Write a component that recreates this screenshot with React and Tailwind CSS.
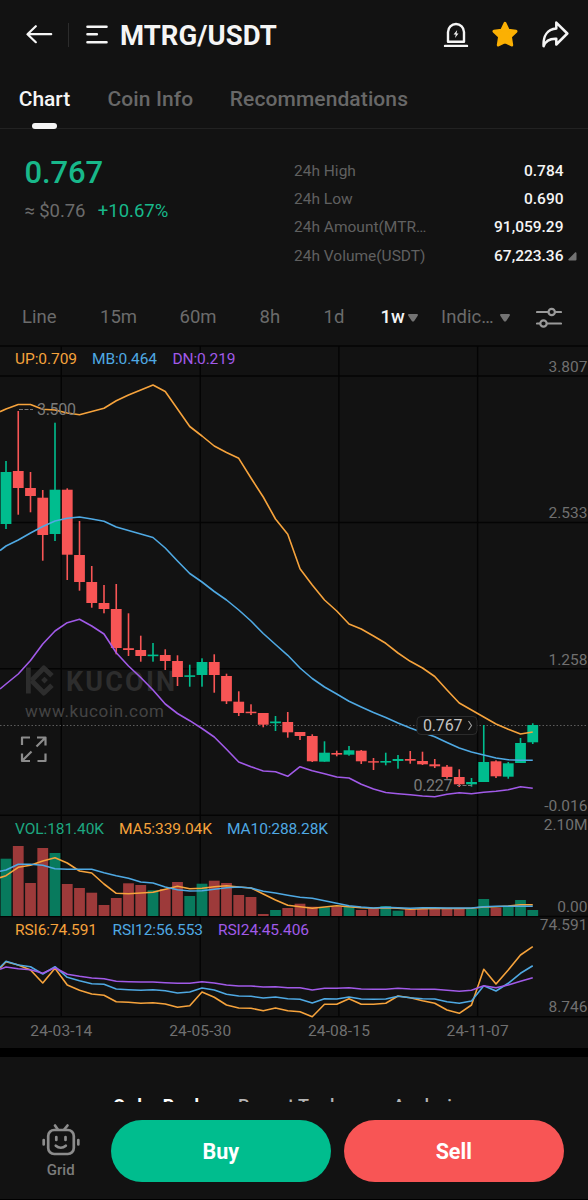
import React from 'react';

const GREEN = '#00bd8e';
const RED = '#f85555';
const ORANGE = '#f6a33c';
const BLUE = '#4fa9e3';
const PURPLE = '#a15ae8';

const STEP = 12.25;
const FIRST_X = 6;
const candleX = (i) => FIRST_X + i * STEP;

// [direction, high, open/close top, open/close bottom, low, volume top]
const CANDLES = [
  ['up', 461, 472, 524, 529, 858.7],
  ['down', 411, 471, 488, 514.7, 846],
  ['down', 472, 488, 496, 512.3, 883],
  ['down', 490, 497.7, 535, 560.7, 848],
  ['up', 422.7, 489.7, 534, 541, 853],
  ['down', 488.3, 489.7, 554.7, 580, 884],
  ['down', 521, 555, 582, 590.7, 888],
  ['down', 566, 582, 603, 607.7, 892.7],
  ['down', 585, 603, 609, 613.3, 905],
  ['down', 584, 609, 648, 654.3, 898],
  ['down', 613.3, 648.2, 650, 656, 883.3],
  ['down', 635.7, 650, 656, 661.7, 885],
  ['up', 643, 654.6, 656.2, 661.7, 890.3],
  ['down', 649.3, 655, 661, 670, 889],
  ['down', 655.3, 661, 677, 686, 882],
  ['up', 664.7, 675.3, 676.9, 686.7, 896],
  ['up', 658.3, 662, 675, 686.7, 883.7],
  ['down', 654.3, 662, 675, 692.7, 880.7],
  ['down', 673.7, 676, 701.3, 704, 883],
  ['down', 691.3, 701.7, 713, 716, 895],
  ['down', 704.3, 711.7, 713.2, 715, 897],
  ['down', 713, 713, 724.7, 727.3, 914],
  ['up', 716, 721.5, 723.2, 731, 910],
  ['down', 712, 722, 732.3, 737.7, 908],
  ['down', 732, 732, 736, 740, 903.7],
  ['down', 734.3, 736, 761.3, 762, 906.7],
  ['up', 741.3, 752.7, 761.7, 761.7, 907.3],
  ['down', 750.7, 753, 754.6, 756.3, 906.7],
  ['up', 746, 750.3, 754.7, 755.7, 906.7],
  ['down', 750, 750.7, 761.3, 764, 910],
  ['down', 758, 761.2, 762.6, 770, 909],
  ['up', 752.7, 761, 762.6, 765.3, 906],
  ['up', 755, 759, 761, 768.7, 910.7],
  ['down', 751, 759, 760.7, 763.7, 909],
  ['down', 751.7, 761, 764.3, 765, 909],
  ['down', 759, 764.3, 766.3, 768, 909],
  ['down', 765, 766.7, 777, 778.7, 909],
  ['down', 769.3, 777, 784.3, 787, 909],
  ['up', 778, 782, 784.3, 786.7, 909],
  ['up', 725, 762, 782, 782, 899],
  ['down', 760.3, 761.3, 776.3, 778, 907.7],
  ['up', 762, 763.3, 776.7, 778.7, 906.7],
  ['up', 738, 743, 763, 763, 900],
  ['up', 723.3, 725, 742.3, 744, 910],
];

// Every series starts with its value at the left edge, then one per candle.
const LINES = [
  {
    id: 'boll-up',
    color: ORANGE,
    values: [411.7, 409, 404.5, 404.5, 409.3, 410, 413, 414.7, 411.5, 408.3, 400.7, 395, 390, 385, 391.5, 409, 426.5, 436, 446, 452.5, 458.3, 478, 497, 519, 534.3, 568.7, 585, 600, 611, 624, 629, 636, 643.3, 653, 661.3, 668, 676.5, 690, 703, 710, 717, 724, 729.3, 734, 732],
  },
  {
    id: 'boll-mid',
    color: BLUE,
    values: [550.5, 546, 540, 533, 526.5, 521, 518.3, 517, 519, 521.3, 527, 530.5, 534, 537.5, 548, 561, 573.5, 582, 591.5, 600, 610, 621, 633.5, 644.5, 655.3, 668, 678.5, 687, 694, 701.3, 707, 712.5, 717.5, 723, 728, 732.5, 736.7, 742.5, 748, 752, 755, 758, 759.7, 760.3, 760.3],
  },
  {
    id: 'boll-down',
    color: PURPLE,
    values: [689, 684, 674, 660.5, 644, 631, 622.7, 619.3, 626, 634, 652.7, 666, 677.5, 690, 704, 713.5, 720.7, 728.5, 737, 749.3, 762, 766.7, 771, 771.7, 776.3, 766.7, 770.7, 773.7, 777, 778, 784.3, 789, 792.5, 793.7, 794.7, 796, 796.7, 794.3, 792.7, 793.7, 792.3, 791.3, 789.7, 786.7, 788.3],
  },
  {
    id: 'vol-ma5',
    color: ORANGE,
    values: [877.7, 875.7, 867.3, 865.3, 861, 857.7, 863, 871, 873, 884, 893.3, 893.7, 893, 892.3, 889.3, 886.3, 888.7, 888.3, 886.7, 885.7, 887, 888, 894, 900, 905.3, 906.7, 908.3, 907, 905.7, 906.7, 907.7, 908.3, 907.7, 908.3, 909.3, 908.7, 908.5, 908.5, 908.5, 908.3, 907, 906.7, 906, 904.7, 904.7],
  },
  {
    id: 'vol-ma10',
    color: BLUE,
    values: [871.3, 870, 864.3, 864.3, 865.3, 868.7, 869.3, 869.3, 869.3, 872.7, 875.7, 878.3, 882, 883, 887, 889.7, 891, 890.7, 889.3, 887.7, 887, 888, 891.3, 893, 895.2, 897.3, 898.3, 900.7, 903.3, 905.7, 907, 908, 907.3, 907.7, 908.3, 907.7, 907.7, 908, 908, 908, 906.7, 906.3, 906.3, 906.3, 906.3],
  },
  {
    id: 'rsi6',
    color: ORANGE,
    values: [968.3, 961.7, 965, 970, 983, 968.3, 985, 990.3, 994, 995.3, 1001.7, 1002.3, 1003.3, 1002.7, 1004, 1007.3, 1005.7, 992, 997.3, 1005, 1008, 1008.3, 1010.7, 1008, 1010.7, 1011.7, 1016.7, 1004.3, 1004.3, 998.7, 1004.3, 1004.3, 1003.3, 996, 997.7, 1000.7, 1003.3, 1010, 1013.3, 1005, 969.3, 984, 970, 955, 946.7],
  },
  {
    id: 'rsi12',
    color: BLUE,
    values: [967.3, 961.3, 965, 966.7, 974, 966.7, 977.3, 980.7, 983.7, 984.3, 989, 989.7, 990.3, 989.7, 990.7, 993, 992, 988, 990, 994.3, 996, 996.3, 998, 997, 998.7, 999.3, 1003, 998.7, 999, 997, 999, 999.3, 999, 996.3, 997.7, 998.7, 999, 1001.7, 1003.3, 1001, 985.7, 991, 983.3, 973.3, 965.7],
  },
  {
    id: 'rsi24',
    color: PURPLE,
    values: [969.3, 967, 968.7, 969.7, 973.3, 967.7, 974.3, 976.3, 978, 978.7, 981.3, 981.7, 982, 982, 982.7, 983.3, 983.3, 981.7, 983, 985, 986, 986, 987, 986.7, 987.7, 987.7, 990, 988.3, 988.3, 987.7, 989, 989.3, 989.3, 988.3, 989, 989.3, 989.3, 990.3, 991.3, 990.3, 985.7, 987.7, 985, 981.3, 977.7],
  },
];

const toPoints = (values) =>
  values.map((y, i) => `${i === 0 ? 0 : candleX(i - 1)},${y}`).join(' ');

const LEGENDS = [
  { x: 15, y: 364, w: 62, color: ORANGE, label: 'UP:0.709' },
  { x: 92, y: 364, w: 65, color: BLUE, label: 'MB:0.464' },
  { x: 172.5, y: 364, w: 63, color: PURPLE, label: 'DN:0.219' },
  { x: 15, y: 834, w: 89, color: '#1da780', label: 'VOL:181.40K' },
  { x: 119, y: 834, w: 93, color: ORANGE, label: 'MA5:339.04K' },
  { x: 227, y: 834, w: 101, color: BLUE, label: 'MA10:288.28K' },
  { x: 15, y: 935, w: 82, color: ORANGE, label: 'RSI6:74.591' },
  { x: 112.5, y: 935, w: 90.5, color: BLUE, label: 'RSI12:56.553' },
  { x: 218, y: 935, w: 91, color: PURPLE, label: 'RSI24:45.406' },
];

const AXIS = [
  { y: 371.5, label: '3.807' },
  { y: 518, label: '2.533' },
  { y: 664.5, label: '1.258' },
  { y: 810.5, label: '-0.016' },
  { y: 829.5, label: '2.10M' },
  { y: 911.5, label: '0.00' },
  { y: 930, label: '74.591' },
  { y: 1012, label: '8.746' },
];

const DATES = [
  { x: 61.3, label: '24-03-14' },
  { x: 200.2, label: '24-05-30' },
  { x: 338.9, label: '24-08-15' },
  { x: 477.6, label: '24-11-07' },
];

const STATS = [
  { label: '24h High', value: '0.784' },
  { label: '24h Low', value: '0.690' },
  { label: '24h Amount(MTR…', value: '91,059.29' },
  { label: '24h Volume(USDT)', value: '67,223.36' },
];

function Caret() {
  return (
    <svg width="10" height="8" viewBox="0 0 10 8" fill="#737373" className="shrink-0">
      <path d="M1.2 0h7.6c1 0 1.5 1 .9 1.8L6.2 6.9c-.6.8-1.8.8-2.4 0L.3 1.8C-.3 1 .2 0 1.2 0Z" />
    </svg>
  );
}

function Header() {
  return (
    <header className="flex h-[69px] items-center pl-[26px] pr-[19px]">
      <svg width="27" height="20" viewBox="0 0 27 20" fill="none" stroke="#f5f5f5" strokeWidth="2.2" strokeLinecap="round" strokeLinejoin="round">
        <path d="M25.2 9.2H1.8M9.8 1.2 1.5 9.2l8.3 8" />
      </svg>
      <div className="ml-[15px] h-6 w-px bg-[#2c2c2c]" />
      <svg width="22" height="20" viewBox="0 0 22 20" fill="none" stroke="#f5f5f5" strokeWidth="2.6" strokeLinecap="round" className="ml-[17px]">
        <path d="M1.5 1.7h19M1.5 9.3h9.3M1.5 17.3h19" />
      </svg>
      <h1 className="ml-[12px] pt-[2px] text-[27.5px] font-bold tracking-[0.05px] text-[#f5f5f5]">MTRG/USDT</h1>
      <div className="ml-auto flex items-center gap-[22px]">
        <svg width="26" height="28" viewBox="0 0 26 28" fill="none" stroke="#f5f5f5" strokeWidth="2.4" strokeLinecap="round" strokeLinejoin="round">
          <path d="M5 20.7V11a8 8 0 0 1 16 0v9.7ZM2 24.9h22" />
          <path d="M14.2 8.9 10.6 13.5h2.2l-.8 3.4 3.5-4.5h-2Z" fill="#f5f5f5" stroke="none" />
        </svg>
        <svg width="28" height="28" viewBox="0 0 28 28" fill="#fbb003" stroke="#fbb003" strokeWidth="3" strokeLinejoin="round">
          <path d="m14 2.4 3.3 6.9 7.7 1-5.6 5.3 1.3 8.4L14 20.6 7.3 24l1.3-8.4L3 10.300l7.700-1Z" />
        </svg>
        <svg width="28" height="28" viewBox="0 0 28 28" fill="none" stroke="#f5f5f5" strokeWidth="2.5" strokeLinecap="round" strokeLinejoin="round">
          <path d="M15.3 1.6 26.3 12.500 15.3 23.500v-5.700C9 17.500 4.800 19.300 2.600 25.200 2 15.400 6.200 8.400 15.300 7.600Z" />
        </svg>
      </div>
    </header>
  );
}

function Tabs() {
  return (
    <nav className="flex h-[60px] items-start border-b border-[#222] pl-[18.5px] text-[21px] font-medium leading-6 text-[#686868]">
      <div className="flex w-[52px] flex-col items-center pt-[18px] text-[#f5f5f5]">
        <span>Chart</span>
        <span className="mt-[12px] h-[6px] w-[25px] rounded-full bg-[#f5f5f5]" />
      </div>
      <span className="ml-[37px] mt-[18px] tracking-[0.1px]">Coin Info</span>
      <span className="ml-[36.5px] mt-[18px] tracking-[0.1px]">Recommendations</span>
    </nav>
  );
}

function Summary() {
  return (
    <section className="flex h-[159px] justify-between pl-[24.500px]">
      <div className="pt-[24px]">
        <p className="text-[31px] font-medium leading-[40px] tracking-[-0.1px] text-[#18b88a]">0.767</p>
        <p className="mt-[6px] flex gap-[12.500px] text-[18.500px] leading-6 text-[#6b6b6b]">
          <span className="tracking-[-0.1px]">≈ $0.76</span>
          <span className="text-[#18b88a]">+10.67%</span>
        </p>
      </div>
      <dl className="flex w-[294px] flex-col pr-[11.500px] pt-[28px] text-[15.500px]">
        {STATS.map((s, i) => (
          <div key={s.label} className="flex h-[28.400px] items-center">
            <dt className="text-[#606060]">{s.label}</dt>
            <dd className="ml-auto font-medium text-[#f5f5f5]">{s.value}</dd>
            <svg width="9" height="9" viewBox="0 0 9 9" className="ml-[4px]" fill={i === 3 ? '#737373' : 'none'}>
              <path d="M8.5 1.2v6.3a1 1 0 0 1-1 1H1.2C.3 8.5 0 7.6.6 7L7 .6c.6-.6 1.5-.3 1.5.6Z" />
            </svg>
          </div>
        ))}
      </dl>
    </section>
  );
}

function Intervals() {
  return (
    <div className="flex h-[57px] items-center pl-[22px] pt-[3px] text-[18.500px] text-[#6b6b6b]">
      <span className="w-[78px]">Line</span>
      <span className="w-[79.500px]">15m</span>
      <span className="w-[80px]">60m</span>
      <span className="w-[64px]">8h</span>
      <span className="w-[57px]">1d</span>
      <span className="flex w-[60.500px] items-center gap-[3px] font-medium text-[#f5f5f5]">
        1w
        <Caret />
      </span>
      <span className="flex w-[95px] items-center gap-[5px]">
        <span className="w-[54px] tracking-[0.1px]">Indic…</span>
        <Caret />
      </span>
      <svg width="26" height="22" viewBox="0 0 26 22" fill="none" stroke="#9a9a9a" strokeWidth="2.200" strokeLinecap="round">
        <path d="M1 5h11M19.500 5H25M1 16.500h3M11 16.500h14" />
        <circle cx="15.700" cy="5" r="3.200" />
        <circle cx="7.500" cy="16.500" r="3.200" />
      </svg>
    </div>
  );
}

function Watermark() {
  return (
    <g fill="#2d2d2d">
      <path d="M26 667.500h4.800v26H26Z" />
      <path d="m31.500 680.500 12.300-12.500 8.200 7.800M31.500 680.500l12.300 12.500 8.200-7.800" fill="none" stroke="#2d2d2d" strokeWidth="5" strokeLinejoin="round" />
      <path d="m44.500 676.700 3.400 3.400-3.400 3.400-3.400-3.400Z" />
      <text x="66" y="690.500" fontSize="27" fontWeight="700" textLength="109">KUCOIN</text>
      <text x="25" y="717" fontSize="17" fill="#444" textLength="139">www.kucoin.com</text>
    </g>
  );
}

function Chart() {
  return (
    <svg width="588" height="702" viewBox="0 345 588 702" className="block" fontSize="16">
      {/* Grid */}
      <g stroke="#040404" strokeWidth="1.4">
        {[346, 376, 522.5, 668.7, 815.3, 916.5, 1016.7].map((y) => (
          <path key={y} d={`M0 ${y}H588`} />
        ))}
        {DATES.map((d) => (
          <path key={d.label} d={`M${d.x} 346V1016`} />
        ))}
      </g>

      <Watermark />

      {/* Latest price line */}
      <path d="M0 725.500H588" stroke="#5c5c5c" strokeWidth="1" strokeDasharray="1.5 2" />

      {/* Volume */}
      {CANDLES.map(([dir, , , , , top], i) => (
        <rect key={i} x={candleX(i) - 5.4} y={top} width="10.8" height={916 - top} fill={dir === 'up' ? '#087a5d' : '#9d3a3a'} />
      ))}

      {/* Candles */}
      {CANDLES.map(([dir, high, top, bottom, low], i) => (
        <g key={i} fill={dir === 'up' ? GREEN : RED}>
          <rect x={candleX(i) - 0.8} y={high} width="1.6" height={low - high} />
          <rect x={candleX(i) - 5.4} y={top} width="10.8" height={bottom - top} />
        </g>
      ))}

      {LINES.map((l) => (
        <polyline key={l.id} points={toPoints(l.values)} fill="none" stroke={l.color} strokeWidth="1.6" strokeLinejoin="round" />
      ))}

      {/* High and low marks */}
      <path d="M19 409.500h14M457 785.500h15" stroke="#777" strokeWidth="1" strokeDasharray="4 1.5" />
      <text x="37" y="414.5" fill="#7a7a7a" textLength="39">3.500</text>
      <text x="413.5" y="790.5" fill="#7a7a7a" textLength="39">0.227</text>

      {/* Price tag */}
      <rect x="417" y="716.5" width="60" height="18" rx="4" fill="#121212" stroke="#2b2b2b" />
      <text x="423" y="730.5" fill="#c4c4c4" textLength="39.5">0.767</text>
      <path d="m468.500 721 3 4.500-3 4.500" fill="none" stroke="#a0a0a0" strokeWidth="1.1" />

      {LEGENDS.map((l) => (
        <text key={l.label} x={l.x} y={l.y} fill={l.color} fontSize="15.5" textLength={l.w}>{l.label}</text>
      ))}
      {AXIS.map((a) => (
        <text key={a.label} x="587.5" y={a.y} fill="#707070" fontSize="15.5" textAnchor="end">{a.label}</text>
      ))}
      {DATES.map((d) => (
        <text key={d.label} x={d.x} y="1036" fill="#707070" fontSize="15.5" textAnchor="middle" textLength="62">{d.label}</text>
      ))}

      {/* Full screen */}
      <path d="M22 745v-7.500h8M22 753.500v7.500h8M22.500 760.500l9-9M37 737.500h8.500v8M45 738l-8.500 8.500M45.500 753.500v7.500h-8" fill="none" stroke="#8c8c8c" strokeWidth="2.2" strokeLinejoin="round" />
    </svg>
  );
}

function BottomBar() {
  return (
    <footer className="flex h-[98px] items-start border-b border-black pt-[18px]">
      <div className="flex w-[110.500px] flex-col items-center pl-[11px] pt-[3px] text-[#7c7c7c]">
        <svg width="38" height="34" viewBox="0 0 38 34" fill="none" stroke="#8c8c8c" strokeWidth="2.7" strokeLinecap="round">
          <rect x="6.2" y="7" width="25.6" height="24" rx="6" />
          <path d="m13 2.500 2.800 4M25.500 2.500l-3.300 4M1.700 17v4.500M36.300 17v4.500M14.300 14v3M23.500 14v3M13.800 22.700c3 2.600 7 2.600 10 0" />
        </svg>
        <span className="mt-[3px] text-[15px] font-medium leading-5">Grid</span>
      </div>
      <button className="h-[62px] w-[220.500px] rounded-full bg-[#00bd8e] pt-[3px] text-[21.500px] font-bold text-white">Buy</button>
      <button className="ml-[12.500px] h-[62px] w-[220.500px] rounded-full bg-[#f85555] pt-[3px] text-[21.500px] font-bold text-white">Sell</button>
    </footer>
  );
}

export default function App() {
  return (
    <div className="h-[1200px] w-[588px] overflow-hidden bg-[#121212] font-['Roboto',sans-serif]">
      <Header />
      <Tabs />
      <Summary />
      <Intervals />
      <Chart />
      <div className="mt-[0.500px] h-[9.500px] bg-black" />
      {/* Order book tabs, cut off by the bottom bar */}
      <div className="flex h-[45px] items-start overflow-hidden pl-[113px] pt-[37px] text-[18px] leading-6 text-[#b5b5b5]">
        <span className="w-[125px] font-bold text-white">Order Book</span>
        <span className="w-[155px] font-medium">Recent Trades</span>
        <span className="font-medium">Analysis</span>
      </div>
      <BottomBar />
    </div>
  );
}
